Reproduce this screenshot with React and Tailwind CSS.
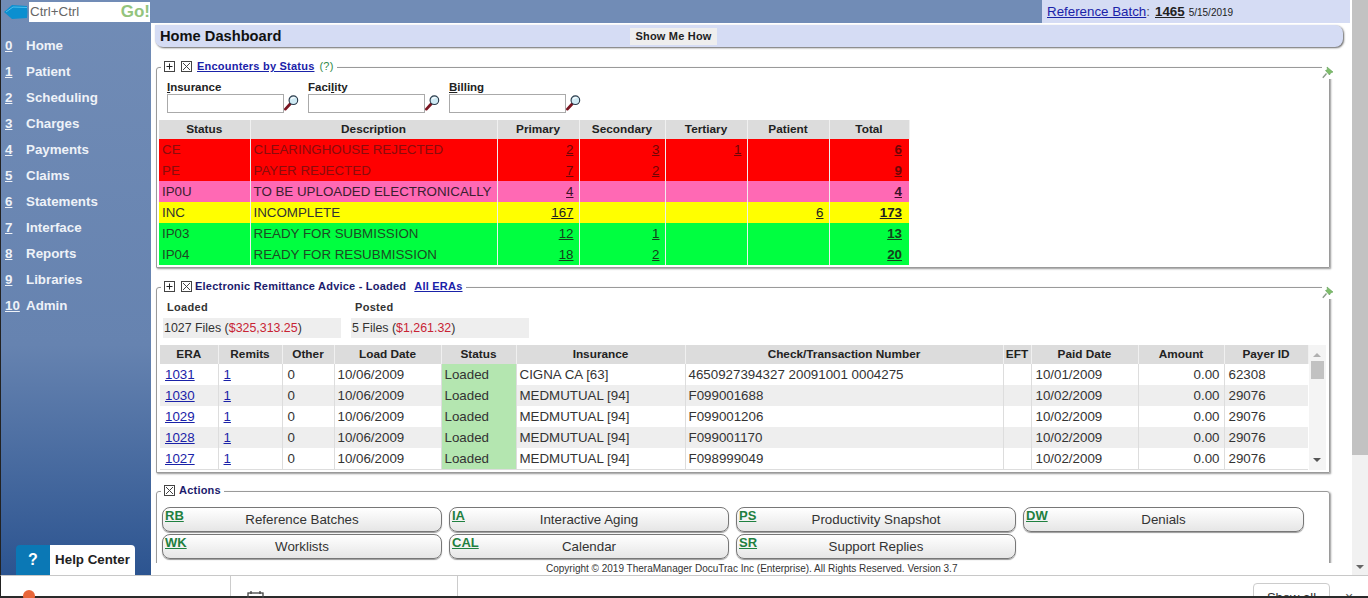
import React from "react";

const nav = ["Home","Patient","Scheduling","Charges","Payments","Claims","Statements","Interface","Reports","Libraries","Admin"];

const Magnifier = () => (
  <svg width="15" height="18" viewBox="0 0 16 18" className="shrink-0 self-start">
    <path d="M6.5 10 L1.5 15.5" stroke="#7a1420" strokeWidth="3" strokeLinecap="round" />
    <circle cx="10" cy="6" r="4.6" fill="#cfeaf4" stroke="#2a3a4a" strokeWidth="1.2" />
    <path d="M7.5 5 Q9 3 11.5 3.4" stroke="#fff" strokeWidth="1.2" fill="none" />
  </svg>
);

const Pin = () => (
  <svg width="12" height="13" viewBox="0 0 12 13" className="absolute right-[-5px] top-[-2px] bg-white">
    <path d="M5 1 L11 6 L8.5 7 L7.5 9 L3.5 4.5 L5.5 3.5 Z" fill="#7fbe6a" stroke="#5f9f58" strokeWidth="0.6" />
    <path d="M4.5 7.5 L0.8 11.8" stroke="#8a9a8a" strokeWidth="1.4" />
  </svg>
);

const BoxIcon = ({ type }) => (
  <svg width="11" height="11" viewBox="0 0 11 11" className="shrink-0">
    <rect x="0.5" y="0.5" width="10" height="10" fill="#fff" stroke="#444" />
    {type === "plus" ? (
      <path d="M2.5 5.5H8.5M5.5 2.5V8.5" stroke="#222" />
    ) : (
      <path d="M2 2L9 9M9 2L2 9" stroke="#444" />
    )}
  </svg>
);

const Panel = ({ legend, pin, className, children }) => (
  <div className={`relative ml-[5px] w-[1174px] shrink-0 rounded-t-[3px] border border-[#9a9a9a] shadow-[1px_1px_2px_#999] ${className}`}>
    <div className="absolute left-[4px] top-[-9px] flex h-[15px] items-center gap-[6px] bg-white px-[3px] text-[11px] font-bold tracking-[0.22px] text-[#1c1c6c]">
      {legend}
    </div>
    {pin && <Pin />}
    {children}
  </div>
);

const Filter = ({ u, rest, pre }) => (
  <div className="w-[141px]">
    <div className="h-[14px] text-[11.5px] font-bold leading-[14px] text-[#222]">
      {pre}<span className="underline">{u}</span>{rest}
    </div>
    <div className="flex">
      <div className="h-[19px] w-[117px] border border-[#aaa] bg-white" />
      <Magnifier />
    </div>
  </div>
);

const enc = [
  ["CE","CLEARINGHOUSE REJECTED","2","3","1","","6","bg-[#ff0000]","text-[#8a0c0c]","text-[#6e0606]"],
  ["PE","PAYER REJECTED","7","2","","","9","bg-[#ff0000]","text-[#8a0c0c]","text-[#6e0606]"],
  ["IP0U","TO BE UPLOADED ELECTRONICALLY","4","","","","4","bg-[#ff69b4]","text-[#3a2030]","text-[#3a1028]"],
  ["INC","INCOMPLETE","167","","","6","173","bg-[#ffff00]","text-[#333]","text-[#222]"],
  ["IP03","READY FOR SUBMISSION","12","1","","","13","bg-[#00ff40]","text-[#1d4a24]","text-[#14401c]"],
  ["IP04","READY FOR RESUBMISSION","18","2","","","20","bg-[#00ff40]","text-[#1d4a24]","text-[#14401c]"],
];

const eras = [
  ["1031","CIGNA CA [63]","4650927394327 20091001 0004275","10/01/2009","62308"],
  ["1030","MEDMUTUAL [94]","F099001688","10/02/2009","29076"],
  ["1029","MEDMUTUAL [94]","F099001206","10/02/2009","29076"],
  ["1028","MEDMUTUAL [94]","F099001170","10/02/2009","29076"],
  ["1027","MEDMUTUAL [94]","F098999049","10/02/2009","29076"],
];

const Th = ({ children }) => (
  <th className="h-[19px] border-r border-[#f0f0f0] bg-[#dcdcdc] p-0 text-center text-[11.8px] font-bold leading-[19px] text-[#222]">{children}</th>
);

const actions = [
  ["RB","Reference Batches"],["IA","Interactive Aging"],["PS","Productivity Snapshot"],["DW","Denials"],
  ["WK","Worklists"],["CAL","Calendar"],["SR","Support Replies"],
];

const ActionButton = ({ k, label }) => (
  <div className="relative flex h-[25px] items-center justify-center rounded-lg border border-[#777] bg-gradient-to-b from-white to-[#e6e6e6] text-[13.33px] text-[#333] shadow-[0_1px_1px_#999]">
    <span className="absolute left-[2px] top-0 text-[13px] font-semibold leading-[16px] text-[#1f8040] underline">{k}</span>
    {label}
  </div>
);

export default function App() {
  return (
    <div className="flex h-[598px] w-full flex-col overflow-hidden bg-white font-['Liberation_Sans',Arial,sans-serif]">
      <div className="flex h-[575px] shrink-0">
        <aside className="relative flex w-[151px] shrink-0 flex-col border-l border-[#222] bg-gradient-to-b from-[#718cb6] via-[#6683b0] via-60% to-[#2c5490]">
          <div className="flex h-[23px] items-center">
            <svg width="28" height="16" viewBox="0 0 28 16" className="shrink-0">
              <path d="M3 8 L11 1 L26 2 Q27 8 26 14 L11 15 Z" fill="#0b8fd0" />
              <path d="M5 8 L12 3 L26 3.5" stroke="#4fc0ee" fill="none" />
            </svg>
            <div className="flex h-[20px] w-[121px] items-center justify-between bg-white pl-[1px] text-[13.33px] text-[#666]">
              <span>Ctrl+Ctrl</span>
              <span className="text-[17px] font-bold leading-none text-[#93c47d]">Go!</span>
            </div>
          </div>
          <nav className="mt-[10px] flex flex-col">
            {nav.map((n, i) => (
              <div key={n} className="flex h-[26px] items-center text-[13.33px] font-bold text-[#eef2f8]">
                <span className="w-[25px] pl-[4px] underline">{i}</span>
                <span>{n}</span>
              </div>
            ))}
          </nav>
          <div className="absolute bottom-0 left-[15px] flex h-[30px] w-[119px] overflow-hidden rounded-t-[4px]">
            <div className="flex w-[34px] items-center justify-center bg-[#0b78b5] text-[16px] font-bold text-white">?</div>
            <div className="flex flex-1 items-center justify-center bg-white text-[13.33px] font-bold text-[#222]">Help Center</div>
          </div>
        </aside>

        <main className="flex min-w-0 flex-1 flex-col">
          <div className="flex h-[23px] w-[1199px] shrink-0 bg-[#718cb6]">
            <div className="flex-1" />
            <div className="flex w-[308px] items-center bg-[#d5dcf4] pl-[5px] text-[#222]">
              <span className="text-[13.33px] text-[#1a22a8] underline">Reference Batch</span>
              <span className="text-[13.33px] text-[#555]">:</span>
              <span className="ml-[5px] text-[13.33px] font-bold underline">1465</span>
              <span className="ml-[4px] mt-[2px] text-[10px]">5/15/2019</span>
            </div>
          </div>
          <div className="ml-[4px] mt-[2px] flex h-[22px] w-[1188px] shrink-0 items-center rounded-r-lg rounded-bl-lg bg-[#d5dcf4] pl-[5px] shadow-[1px_1px_2px_#666]">
            <span className="w-[470px] text-[14.67px] font-bold text-[#111]">Home Dashboard</span>
            <span className="flex h-[17px] w-[87px] items-center justify-center bg-[#eeeeee] text-[11px] font-bold tracking-[0.2px] text-[#222]">Show Me How</span>
          </div>

          <div className="mt-[20px] flex min-h-0 w-full flex-1 flex-col">
            <Panel
              pin
              className="h-[201px]"
              legend={
                <>
                  <BoxIcon type="plus" />
                  <BoxIcon type="x" />
                  <span className="-ml-[1px] text-[#1a22a8] underline">Encounters by Status</span>
                  <span className="-ml-[1px] font-normal text-[#2f8a4a]">(?)</span>
                </>
              }
            >
              <div className="flex pl-[10px] pt-[12px]">
                <Filter u="I" rest="nsurance" />
                <Filter pre="Faci" u="l" rest="ity" />
                <Filter u="B" rest="illing" />
              </div>
              <table className="ml-[2px] mt-[7px] w-[750px] table-fixed border-collapse">
                <colgroup>
                  <col className="w-[91px]" /><col className="w-[247px]" /><col className="w-[82px]" /><col className="w-[86px]" /><col className="w-[82px]" /><col className="w-[82px]" /><col className="w-[80px]" />
                </colgroup>
                <thead>
                  <tr>
                    {["Status","Description","Primary","Secondary","Tertiary","Patient","Total"].map((h) => <Th key={h}>{h}</Th>)}
                  </tr>
                </thead>
                <tbody>
                  {enc.map((r) => (
                    <tr key={r[0]} className={`h-[21px] text-[13.33px] leading-[21px] ${r[7]} ${r[8]}`}>
                      <td className="border-r border-[#eeeeee] p-0 pl-[3px]">{r[0]}</td>
                      <td className="border-r border-[#eeeeee] p-0 pl-[3px]">{r[1]}</td>
                      {[2,3,4,5].map((c) => (
                        <td key={c} className={`border-r border-[#eeeeee] p-0 pr-[5px] text-right underline ${r[9]}`}>{r[c]}</td>
                      ))}
                      <td className={`p-0 pr-[7px] text-right font-bold underline ${r[9]}`}>{r[6]}</td>
                    </tr>
                  ))}
                </tbody>
              </table>
            </Panel>

            <Panel
              pin
              className="mt-[19px] h-[186px]"
              legend={
                <>
                  <BoxIcon type="plus" />
                  <BoxIcon type="x" />
                  <span className="-ml-[3px]">Electronic Remittance Advice - Loaded</span>
                  <span className="ml-[2px] text-[#1a22a8] underline">All ERAs</span>
                </>
              }
            >
              <div className="flex pt-[12px]">
                <div className="ml-[6px] w-[188px]">
                  <div className="h-[18px] pl-[4px] text-[11px] font-bold leading-[14px] tracking-[0.3px] text-[#333]">Loaded</div>
                  <div className="flex h-[20px] w-[178px] items-center bg-[#eeeeee] pl-[1px] text-[12.4px] text-[#333]">1027 Files (<span className="text-[#c82333]">$325,313.25</span>)</div>
                </div>
                <div className="w-[178px]">
                  <div className="h-[18px] pl-[4px] text-[11px] font-bold leading-[14px] tracking-[0.3px] text-[#333]">Posted</div>
                  <div className="flex h-[20px] w-[178px] items-center bg-[#eeeeee] pl-[1px] text-[12.4px] text-[#333]">5 Files (<span className="text-[#c82333]">$1,261.32</span>)</div>
                </div>
              </div>
              <div className="ml-[3px] mt-[7px] flex w-[1166px]">
                <table className="w-[1148px] table-fixed border-collapse border-b border-[#ddd]">
                  <colgroup>
                    <col className="w-[58px]" /><col className="w-[64px]" /><col className="w-[52px]" /><col className="w-[107px]" /><col className="w-[75px]" /><col className="w-[169px]" /><col className="w-[318px]" /><col className="w-[28px]" /><col className="w-[107px]" /><col className="w-[86px]" /><col className="w-[84px]" />
                  </colgroup>
                  <thead>
                    <tr>
                      {["ERA","Remits","Other","Load Date","Status","Insurance","Check/Transaction Number","EFT","Paid Date","Amount","Payer ID"].map((h) => <Th key={h}>{h}</Th>)}
                    </tr>
                  </thead>
                  <tbody>
                    {eras.map((r, i) => (
                      <tr key={r[0]} className={`h-[21px] text-[13.33px] leading-[21px] text-[#333] ${i % 2 ? "bg-[#eeeeee]" : "bg-white"}`}>
                        <td className="border-r border-[#ddd] p-0 pl-[5px] text-[#1a22a8] underline">{r[0]}</td>
                        <td className="border-r border-[#ddd] p-0 pl-[5px] text-[#1a22a8] underline">1</td>
                        <td className="border-r border-[#ddd] p-0 pl-[5px]">0</td>
                        <td className="border-r border-[#ddd] p-0 pl-[3px]">10/06/2009</td>
                        <td className="border-r border-[#ddd] bg-[#b4e6b0] p-0 pl-[3px]">Loaded</td>
                        <td className="border-r border-[#ddd] p-0 pl-[3px]">{r[1]}</td>
                        <td className="border-r border-[#ddd] p-0 pl-[3px]">{r[2]}</td>
                        <td className="border-r border-[#ddd] p-0" />
                        <td className="border-r border-[#ddd] p-0 pl-[4px]">{r[3]}</td>
                        <td className="border-r border-[#ddd] p-0 pr-[4px] text-right">0.00</td>
                        <td className="p-0 pl-[4px]">{r[4]}</td>
                      </tr>
                    ))}
                  </tbody>
                </table>
                <div className="flex w-[18px] flex-col items-center bg-[#f4f4f4]">
                  <svg width="10" height="6" viewBox="0 0 10 6" className="mt-[7px]"><path d="M1 5L5 1L9 5Z" fill="#b0b0b0" /></svg>
                  <div className="mt-[3px] h-[18px] w-[13px] bg-[#c2c2c2]" />
                  <div className="flex-1" />
                  <svg width="10" height="6" viewBox="0 0 10 6" className="mb-[7px]"><path d="M1 1L5 5L9 1Z" fill="#555" /></svg>
                </div>
              </div>
            </Panel>

            <div className="mt-[10px] h-[80px] shrink-0 overflow-hidden pt-[8px]">
              <Panel
                className="h-[90px]"
                legend={
                  <>
                    <BoxIcon type="x" />
                    <span className="-ml-[2px]">Actions</span>
                  </>
                }
              >
                <div className="grid grid-cols-[280px_280px_280px_281px] gap-x-[7px] gap-y-[2px] pl-[5px] pt-[15px]">
                  {actions.map(([k, l]) => <ActionButton key={k} k={k} label={l} />)}
                </div>
              </Panel>
            </div>
            <div className="flex-1 pl-[395px] text-[10px] leading-[11px] text-[#333]">
              Copyright © 2019 TheraManager DocuTrac Inc (Enterprise). All Rights Reserved. Version 3.7
            </div>
          </div>
        </main>

        <div className="flex w-[16px] shrink-0 flex-col bg-[#f1f1f1]">
          <div className="h-[455px] bg-[#c2c2c2]" />
          <div className="flex-1" />
          <svg width="10" height="6" viewBox="0 0 10 6" className="mb-[5px] ml-[3px]"><path d="M1 1L5 5L9 1Z" fill="#666" /></svg>
        </div>
      </div>

      <div className="flex h-[21px] shrink-0 border-l border-t border-[#222] border-t-[#c8c8c8] bg-white">
        <div className="relative w-[230px] border-r border-[#ccc]">
          <div className="absolute left-[22px] top-[14px] size-[12px] rounded-full bg-[#e8663a]" />
        </div>
        <div className="relative w-[227px] border-r border-[#ccc]">
          <svg width="18" height="10" viewBox="0 0 18 10" className="absolute left-[16px] top-[15px]">
            <rect x="1" y="2" width="15" height="10" fill="none" stroke="#444" strokeWidth="1.3" />
            <path d="M4 0V3M13 0V3" stroke="#444" strokeWidth="1.3" />
          </svg>
        </div>
        <div className="flex-1" />
        <div className="mt-[7px] h-[20px] w-[77px] rounded-t-[4px] border border-[#ccc] text-center text-[13px] leading-[27px] text-[#333]">Show all</div>
        <div className="w-[38px] pt-[14px] text-center text-[14px] leading-none text-[#555]">×</div>
      </div>
      <div className="h-[2px] shrink-0 bg-[#2a2a2a]" />
    </div>
  );
}
